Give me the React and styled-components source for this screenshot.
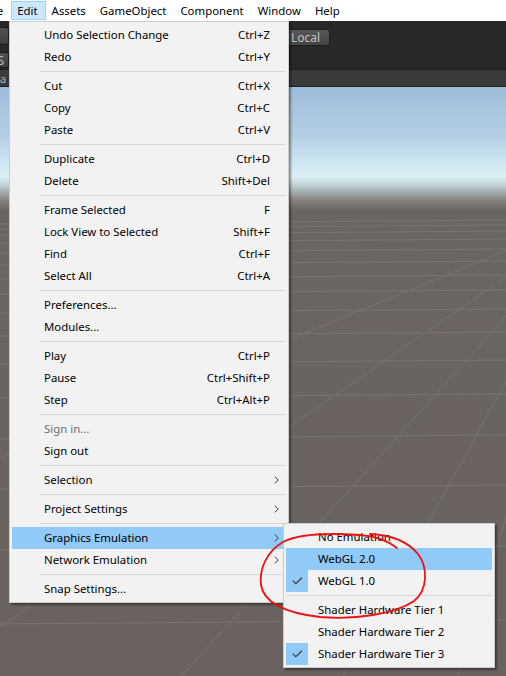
import React from 'react';
import styled, { createGlobalStyle } from 'styled-components';

const GlobalStyle = createGlobalStyle`
	html, body {
		margin: 0;
		padding: 0;
		background: #6a6460;
	}
`;

const Screen = styled.div`
	position: relative;
	width: 506px;
	height: 676px;
	overflow: hidden;
	display: flex;
	flex-direction: column;
	font-family: 'Noto Sans', 'Open Sans', sans-serif;
	font-size: 11.4px;
`;

const MenuBar = styled.div`
	height: 21px;
	flex-shrink: 0;
	background: #ffffff;
	display: flex;
	align-items: center;
	white-space: nowrap;
`;

const BarItem = styled.div`
	height: 19px;
	box-sizing: border-box;
	padding: 0 7px 0 5px;
	display: flex;
	align-items: center;
	color: #000;
	border: 1px solid ${(p) => (p.$open ? '#99d1ff' : 'transparent')};
	background: ${(p) => (p.$open ? '#cce8ff' : 'transparent')};
	margin-left: ${(p) => p.$shift || 0}px;
`;

const Toolbar = styled.div`
	height: 48px;
	flex-shrink: 0;
	background: #282828;
	display: flex;
	align-items: flex-start;
`;

const LeftTools = styled.div`
	width: 21px;
	margin-left: -12px;
	padding-top: 6px;
	display: flex;
	flex-direction: column;
	gap: 7px;
`;

const ToolButton = styled.div`
	height: ${(p) => p.$h}px;
	box-sizing: border-box;
	border: 1px solid #1b1b1b;
	border-radius: 3px;
	background: linear-gradient(#505050, #3e3e3e);
	color: #b9b9b9;
	font-size: 12px;
	display: flex;
	align-items: center;
	justify-content: flex-end;
	padding-right: 4px;
`;

const LocalButton = styled.div`
	margin-left: 278px;
	margin-top: 8px;
	height: 17px;
	box-sizing: border-box;
	padding: 0 9px 0 3px;
	border: 1px solid #1e1e1e;
	border-radius: 3px;
	background: linear-gradient(#565656, #464646);
	color: #c2c2c2;
	font-size: 12px;
	display: flex;
	align-items: center;
`;

const TabStrip = styled.div`
	height: 18px;
	flex-shrink: 0;
	box-sizing: border-box;
	background: #3a3a3a;
	border-top: 1px solid #1d1d1d;
	border-bottom: 1px solid #1f1f1f;
	color: #b5b5b5;
	font-size: 11px;
	display: flex;
	align-items: center;
	padding-left: 0;
`;

const Scene = styled.div`
	flex: 1;
	position: relative;
	background: linear-gradient(
		#9ebddb 0px,
		#b4cfe5 50px,
		#d0e8f1 78px,
		#daeff3 90px,
		#c4d6da 97px,
		#a3adaf 105px,
		#857f7d 114px,
		#6b6561 123px,
		#69625e 100%
	);
`;

const Grid = styled.svg`
	position: absolute;
	inset: 0;
	width: 100%;
	height: 100%;
`;

const Menu = styled.div`
	position: absolute;
	left: ${(p) => p.$x}px;
	top: ${(p) => p.$y}px;
	width: ${(p) => p.$w}px;
	box-sizing: border-box;
	background: #f2f2f2;
	border: 1px solid #cccccc;
	padding: 2px;
	box-shadow: 2px 2px 2px rgba(0, 0, 0, 0.4);
	color: #000;
	white-space: nowrap;
`;

const Row = styled.div`
	height: 22px;
	display: grid;
	grid-template-columns: 22px 10px 1fr auto 16px;
	align-items: center;
	background: ${(p) => (p.$active ? '#91c9f7' : 'transparent')};
	color: ${(p) => (p.$disabled ? '#6d6d6d' : '#000')};
`;

const CheckCell = styled.div`
	height: 22px;
	display: flex;
	align-items: center;
	justify-content: center;
	background: ${(p) => (p.$checked ? '#91c9f7' : 'transparent')};
`;

const Label = styled.span`
	grid-column: 3;
	position: relative;
	top: -1px;
`;

const Shortcut = styled.span`
	grid-column: 4;
	text-align: right;
	padding-left: 16px;
	position: relative;
	top: -1px;
`;

const ArrowCell = styled.div`
	grid-column: 5;
	display: flex;
	align-items: center;
	padding-left: 4px;
`;

const Separator = styled.div`
	height: 7px;
	display: flex;
	align-items: center;
	padding-left: ${(p) => (p.$full ? 0 : 28)}px;

	&::after {
		content: '';
		flex: 1;
		height: 1px;
		background: #d7d7d7;
	}
`;

const Annotation = styled.svg`
	position: absolute;
	left: 0;
	top: 0;
	width: 506px;
	height: 676px;
	pointer-events: none;
`;

const Chevron = () => (
	<svg width="5" height="8" viewBox="0 0 5 8">
		<path d="M0.8 0.6 L4.2 4 L0.8 7.4" fill="none" stroke="#3c3c3c" strokeWidth="1" />
	</svg>
);

const Check = () => (
	<svg width="11" height="8" viewBox="0 0 11 8" style={{ marginLeft: 1 }}>
		<path d="M0.8 3.6 L3.8 6.6 L10 0.8" fill="none" stroke="#3a3a3a" strokeWidth="1.2" />
	</svg>
);

const editMenu = [
	[
		{ label: 'Undo Selection Change', shortcut: 'Ctrl+Z' },
		{ label: 'Redo', shortcut: 'Ctrl+Y' },
	],
	[
		{ label: 'Cut', shortcut: 'Ctrl+X' },
		{ label: 'Copy', shortcut: 'Ctrl+C' },
		{ label: 'Paste', shortcut: 'Ctrl+V' },
	],
	[
		{ label: 'Duplicate', shortcut: 'Ctrl+D' },
		{ label: 'Delete', shortcut: 'Shift+Del' },
	],
	[
		{ label: 'Frame Selected', shortcut: 'F' },
		{ label: 'Lock View to Selected', shortcut: 'Shift+F' },
		{ label: 'Find', shortcut: 'Ctrl+F' },
		{ label: 'Select All', shortcut: 'Ctrl+A' },
	],
	[{ label: 'Preferences...' }, { label: 'Modules...' }],
	[
		{ label: 'Play', shortcut: 'Ctrl+P' },
		{ label: 'Pause', shortcut: 'Ctrl+Shift+P' },
		{ label: 'Step', shortcut: 'Ctrl+Alt+P' },
	],
	[{ label: 'Sign in...', disabled: true }, { label: 'Sign out' }],
	[{ label: 'Selection', arrow: true }],
	[{ label: 'Project Settings', arrow: true }],
	[
		{ label: 'Graphics Emulation', arrow: true, active: true },
		{ label: 'Network Emulation', arrow: true },
	],
	[{ label: 'Snap Settings...' }],
];

const emulationMenu = [
	[
		{ label: 'No Emulation' },
		{ label: 'WebGL 2.0', active: true },
		{ label: 'WebGL 1.0', checked: true },
	],
	[
		{ label: 'Shader Hardware Tier 1' },
		{ label: 'Shader Hardware Tier 2' },
		{ label: 'Shader Hardware Tier 3', checked: true },
	],
];

function MenuRow({ item }) {
	return (
		<Row $active={item.active} $disabled={item.disabled}>
			<CheckCell $checked={item.checked}>{item.checked && <Check />}</CheckCell>
			<Label>{item.label}</Label>
			{item.shortcut && <Shortcut>{item.shortcut}</Shortcut>}
			<ArrowCell>{item.arrow && <Chevron />}</ArrowCell>
		</Row>
	);
}

function DropMenu({ groups, x, y, w, fullSeparators }) {
	return (
		<Menu $x={x} $y={y} $w={w}>
			{groups.map((group, gi) => (
				<React.Fragment key={gi}>
					{gi > 0 && <Separator $full={fullSeparators} />}
					{group.map((item) => (
						<MenuRow key={item.label} item={item} />
					))}
				</React.Fragment>
			))}
		</Menu>
	);
}

const horizon = [222, 227, 233, 241, 251, 263, 277, 292, 311, 334, 362, 396, 437, 487, 548, 622];
const rays = [-588, -106, 160, 330, 450];

function GroundGrid() {
	return (
		<Grid viewBox="0 87 506 589" preserveAspectRatio="none">
			{horizon.map((y) => (
				<line key={y} x1="0" y1={y + 2} x2="506" y2={y - 2} stroke="#7a7470" strokeWidth="1" />
			))}
			{rays.map((x) => (
				<line key={x} x1="600" y1="212" x2={x} y2="700" stroke="#7a7470" strokeWidth="1" />
			))}
		</Grid>
	);
}

export default function App() {
	return (
		<Screen>
			<GlobalStyle />
			<MenuBar>
				<BarItem $shift={-21}>File</BarItem>
				<BarItem $open>Edit</BarItem>
				<BarItem>Assets</BarItem>
				<BarItem>GameObject</BarItem>
				<BarItem>Component</BarItem>
				<BarItem>Window</BarItem>
				<BarItem>Help</BarItem>
			</MenuBar>
			<Toolbar>
				<LeftTools>
					<ToolButton $h={18} />
					<ToolButton $h={16}>S</ToolButton>
				</LeftTools>
				<LocalButton>Local</LocalButton>
			</Toolbar>
			<TabStrip>a</TabStrip>
			<Scene>
				<GroundGrid />
			</Scene>
			<DropMenu groups={editMenu} x={9} y={21} w={280} />
			<DropMenu groups={emulationMenu} x={283} y={523} w={212} fullSeparators />
			<Annotation viewBox="0 0 506 676">
				<path
					d="M397 548 C388 541, 375 536, 360 535 C330 533, 300 533, 283 542 C266 552, 259 570, 261 585 C264 603, 285 613, 320 617 C355 620, 395 614, 414 601 C428 590, 428 567, 418 554 C408 542, 393 535, 370 534"
					fill="none"
					stroke="#ee1111"
					strokeWidth="1.8"
					strokeLinecap="round"
				/>
			</Annotation>
		</Screen>
	);
}
